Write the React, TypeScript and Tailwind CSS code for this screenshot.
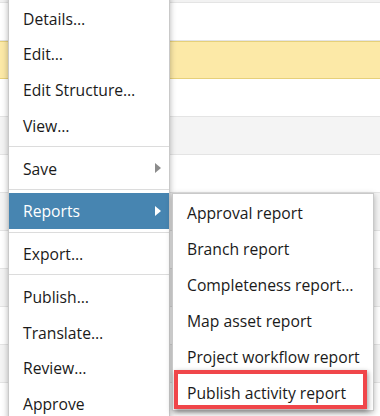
import { ReactNode } from "react";

type Entry = { label: string; sub?: boolean; active?: boolean } | "sep"

const mainItems: Entry[] = [
  { label: "Details…" },
  { label: "Edit…" },
  { label: "Edit Structure…" },
  { label: "View…" },
  "sep",
  { label: "Save", sub: true },
  "sep",
  { label: "Reports", sub: true, active: true },
  "sep",
  { label: "Export…" },
  "sep",
  { label: "Publish…" },
  { label: "Translate…" },
  { label: "Review…" },
  { label: "Approve" },
]

const reportItems = [
  "Approval report",
  "Branch report",
  "Completeness report…",
  "Map asset report",
  "Project workflow report",
  "Publish activity report",
]

const rows = ["top", "white", "selected", "white", "gray", "white", "gray", "white", "gray", "white", "gray", "white"]

function Arrow({ active }: { active?: boolean }) {
  return (
    <svg width="6" height="10" viewBox="0 0 6 10" className="ml-auto -mt-[3px]">
      <path d="M0 0 L6 5 L0 10 Z" fill={active ? "#ffffff" : "#8c8c8c"} />
    </svg>
  )
}

function Row({ kind }: { kind: string }) {
  if (kind === "top") return <div className="h-[3px] bg-[#f2f2f2] border-b border-[#e4e4e4]" />
  if (kind === "selected") return <div className="h-[38px] bg-[#fce9a7] border-y border-[#e6d07a]" />
  if (kind === "gray") return <div className="h-[38px] bg-[#f4f4f4] border-b border-[#e4e4e4]" />
  return <div className="h-[38px] bg-white border-b border-[#e4e4e4]" />
}

function Item({ children, active }: { children: ReactNode; active?: boolean }) {
  return (
    <div
      className={
        active
          ? "h-[35.75px] flex items-center pt-[3px] pl-[14px] pr-[8px] bg-[#4785b1] text-white"
          : "h-[35.75px] flex items-center pt-[3px] pl-[14px] pr-[8px] text-[#1a1a1a]"
      }
    >
      {children}
    </div>
  )
}

export default function App() {
  return (
    <div
      className="relative w-[380px] h-[416px] overflow-hidden bg-white text-[15.7px]"
      style={{ fontFamily: '"Open Sans", "Noto Sans", sans-serif' }}
    >
      <div className="flex flex-col">
        {rows.map((r, i) => (
          <Row key={i} kind={r} />
        ))}
      </div>

      {/* main context menu */}
      <div className="absolute left-[8px] top-[-5px] w-[162px] pt-[4px] bg-white border border-[#c9c9c9] shadow-[0_2px_6px_rgba(0,0,0,0.3)]">
        {mainItems.map((it, i) =>
          it === "sep" ? (
            <div key={i} className="my-[3px] h-px bg-[#dcdcdc]" />
          ) : (
            <Item key={i} active={it.active}>
              <span>{it.label}</span>
              {it.sub && <Arrow active={it.active} />}
            </Item>
          )
        )}
      </div>

      {/* reports submenu */}
      <div className="absolute left-[172px] top-[193px] w-[202px] bg-white border border-[#c9c9c9] shadow-[0_2px_6px_rgba(0,0,0,0.3)]">
        {reportItems.map((label) => (
          <div key={label} className="h-9 flex items-center pt-[3px] pl-[14px] text-[#1a1a1a]">
            {label}
          </div>
        ))}
      </div>

      {/* annotation box */}
      <div className="absolute left-[174px] top-[370px] w-[193px] h-[39px] border-4 border-[#f0464a] shadow-[1px_2px_5px_rgba(0,0,0,0.4)]" />
    </div>
  )
}
